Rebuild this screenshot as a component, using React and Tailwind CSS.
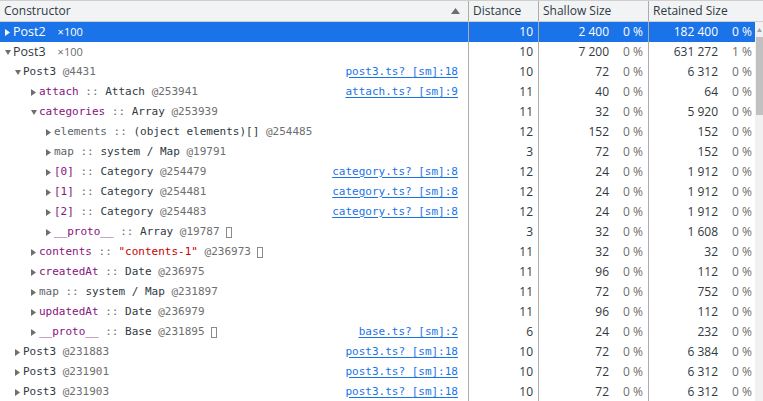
import React from 'react';

const MONO = "font-['DejaVu_Sans_Mono',monospace] text-[11px]";
const SANS = "font-['Open_Sans',sans-serif] text-[12px]";

const rows = [
    { level: 0, open: false, kind: 'group', name: 'Post2', count: '×100', dist: '10', shallow: '2 400', sp: '0 %', retained: '182 400', rp: '0 %', selected: true },
    { level: 0, open: true, kind: 'group', name: 'Post3', count: '×100', dist: '10', shallow: '7 200', sp: '0 %', retained: '631 272', rp: '1 %' },
    { level: 1, open: true, kind: 'obj', name: 'Post3', id: '@4431', link: 'post3.ts? [sm]:18', dist: '10', shallow: '72', sp: '0 %', retained: '6 312', rp: '0 %' },
    { level: 2, open: false, kind: 'prop', name: 'attach', type: 'Attach', id: '@253941', link: 'attach.ts? [sm]:9', dist: '11', shallow: '40', sp: '0 %', retained: '64', rp: '0 %' },
    { level: 2, open: true, kind: 'prop', name: 'categories', type: 'Array', id: '@253939', dist: '11', shallow: '32', sp: '0 %', retained: '5 920', rp: '0 %' },
    { level: 3, open: false, kind: 'internal', name: 'elements', type: '(object elements)[]', id: '@254485', dist: '12', shallow: '152', sp: '0 %', retained: '152', rp: '0 %' },
    { level: 3, open: false, kind: 'internal', name: 'map', type: 'system / Map', id: '@19791', dist: '3', shallow: '72', sp: '0 %', retained: '152', rp: '0 %' },
    { level: 3, open: false, kind: 'prop', name: '[0]', type: 'Category', id: '@254479', link: 'category.ts? [sm]:8', dist: '12', shallow: '24', sp: '0 %', retained: '1 912', rp: '0 %' },
    { level: 3, open: false, kind: 'prop', name: '[1]', type: 'Category', id: '@254481', link: 'category.ts? [sm]:8', dist: '12', shallow: '24', sp: '0 %', retained: '1 912', rp: '0 %' },
    { level: 3, open: false, kind: 'prop', name: '[2]', type: 'Category', id: '@254483', link: 'category.ts? [sm]:8', dist: '12', shallow: '24', sp: '0 %', retained: '1 912', rp: '0 %' },
    { level: 3, open: false, kind: 'prop', name: '__proto__', type: 'Array', id: '@19787', box: true, dist: '3', shallow: '32', sp: '0 %', retained: '1 608', rp: '0 %' },
    { level: 2, open: false, kind: 'prop', name: 'contents', str: '"contents-1"', id: '@236973', box: true, dist: '11', shallow: '32', sp: '0 %', retained: '32', rp: '0 %' },
    { level: 2, open: false, kind: 'prop', name: 'createdAt', type: 'Date', id: '@236975', dist: '11', shallow: '96', sp: '0 %', retained: '112', rp: '0 %' },
    { level: 2, open: false, kind: 'internal', name: 'map', type: 'system / Map', id: '@231897', dist: '11', shallow: '72', sp: '0 %', retained: '752', rp: '0 %' },
    { level: 2, open: false, kind: 'prop', name: 'updatedAt', type: 'Date', id: '@236979', dist: '11', shallow: '96', sp: '0 %', retained: '112', rp: '0 %' },
    { level: 2, open: false, kind: 'prop', name: '__proto__', type: 'Base', id: '@231895', box: true, link: 'base.ts? [sm]:2', dist: '6', shallow: '24', sp: '0 %', retained: '232', rp: '0 %' },
    { level: 1, open: false, kind: 'obj', name: 'Post3', id: '@231883', link: 'post3.ts? [sm]:18', dist: '10', shallow: '72', sp: '0 %', retained: '6 384', rp: '0 %' },
    { level: 1, open: false, kind: 'obj', name: 'Post3', id: '@231901', link: 'post3.ts? [sm]:18', dist: '10', shallow: '72', sp: '0 %', retained: '6 312', rp: '0 %' },
    { level: 1, open: false, kind: 'obj', name: 'Post3', id: '@231903', link: 'post3.ts? [sm]:18', dist: '10', shallow: '72', sp: '0 %', retained: '6 312', rp: '0 %' },
];

const PAD = ['pl-[5px]', 'pl-[15px]', 'pl-[31px]', 'pl-[46px]'];

function Arrow({ open, white }) {
    const fill = white ? '#ffffff' : '#6e6e6e';
    return (
        <span className="w-[8px] h-[20px] flex items-center shrink-0">
            {open ? (
                <svg width="6" height="5" viewBox="0 0 6 5"><path d="M0 0H6L3 5Z" fill={fill} /></svg>
            ) : (
                <svg width="5" height="7" viewBox="0 0 5 7"><path d="M0 0L5 3.5L0 7Z" fill={fill} /></svg>
            )}
        </span>
    );
}

function Name({ row }) {
    if (row.kind === 'group') {
        return (
            <span className={`${SANS} flex items-baseline gap-[12px] ${row.selected ? 'text-white' : 'text-[#303942]'}`}>
                <span className="text-[12.5px]">{row.name}</span>
                <span className={`text-[11px] ${row.selected ? 'text-white' : 'text-[#6e6e6e]'}`}>{row.count}</span>
            </span>
        );
    }
    if (row.kind === 'obj') {
        return (
            <span className={`${MONO} text-[#303942] whitespace-pre`}>
                {row.name} <span className="text-[#6e6e6e]">{row.id}</span>
            </span>
        );
    }
    const nameCls = row.kind === 'internal' ? 'text-[#5f6368]' : 'text-[#881280]';
    return (
        <span className={`${MONO} text-[#303942] whitespace-pre flex items-center`}>
            <span className={nameCls}>{row.name}</span>
            <span className="text-[#6e6e6e]"> :: </span>
            {row.str ? <span className="text-[#c80000]">{row.str}</span> : <span>{row.type}</span>}
            <span className="text-[#6e6e6e]"> {row.id}</span>
            {row.box && <span className="ml-[6px] w-[6px] h-[11px] border border-[#8a8a8a] inline-block" />}
        </span>
    );
}

function Row({ row }) {
    const sel = row.selected;
    const num = sel ? 'text-white' : 'text-[#303942]';
    const pct = sel ? 'text-white' : 'text-[#6e6e6e]';
    return (
        <div className={`flex h-[20px] ${sel ? 'bg-[#1a73e8]' : 'bg-white'}`}>
            <div className={`w-[469px] border-r border-[#acacac] flex items-center ${PAD[row.level]} pr-[10px]`}>
                <Arrow open={row.open} white={sel} />
                <Name row={row} />
                {row.link && (
                    <span className={`${MONO} ml-auto text-[#1a73e8] underline underline-offset-2 whitespace-pre`}>{row.link}</span>
                )}
            </div>
            <div className={`w-[70px] border-r border-[#acacac] flex items-center justify-end pr-[5px] ${SANS} ${num}`}>{row.dist}</div>
            <div className={`w-[110px] border-r border-[#acacac] flex items-center justify-end pr-[5px] ${SANS}`}>
                <span className={num}>{row.shallow}</span>
                <span className={`w-[34px] text-right ${pct}`}>{row.sp}</span>
            </div>
            <div className={`w-[106px] flex items-center justify-end pr-[3px] ${SANS}`}>
                <span className={num}>{row.retained}</span>
                <span className={`w-[34px] text-right ${pct}`}>{row.rp}</span>
            </div>
        </div>
    );
}

export default function App() {
    return (
        <div className="w-[763px] h-[401px] overflow-hidden bg-white">
            <div className={`flex h-[22px] bg-[#f1f3f4] border-t border-b border-[#cfcfcf] ${SANS} text-[#303942]`}>
                <div className="w-[469px] border-r border-[#acacac] flex items-center pl-[4px] pr-[8px]">
                    <span>Constructor</span>
                    <svg className="ml-auto" width="9" height="6" viewBox="0 0 9 6"><path d="M0 6L4.5 0L9 6Z" fill="#6e6e6e" /></svg>
                </div>
                <div className="w-[70px] border-r border-[#acacac] flex items-center pl-[4px]">Distance</div>
                <div className="w-[110px] border-r border-[#acacac] flex items-center pl-[4px]">Shallow Size</div>
                <div className="flex-1 flex items-center pl-[4px]">Retained Size</div>
            </div>
            <div className="flex">
                <div className="w-[755px]">
                    {rows.map((r, i) => <Row key={i} row={r} />)}
                </div>
                <div className="w-[8px] bg-[#f1f1f1] flex flex-col items-center">
                    <svg className="mt-[6px]" width="5" height="4" viewBox="0 0 5 4"><path d="M0 4L2.5 0L5 4Z" fill="#a3a3a3" /></svg>
                    <div className="mt-[5px] w-[7px] ml-[1px] h-[78px] bg-[#c1c1c1]" />
                </div>
            </div>
        </div>
    );
}
